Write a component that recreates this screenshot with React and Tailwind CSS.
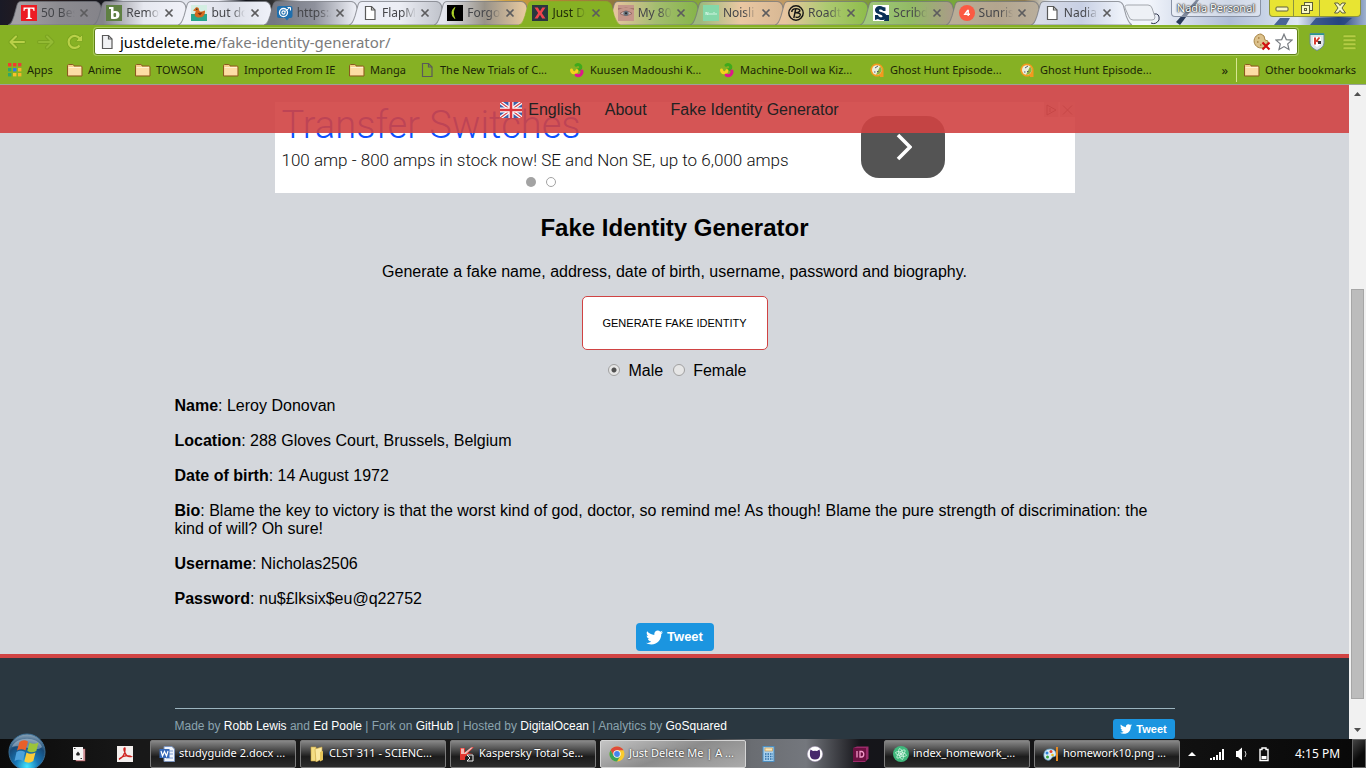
import { FaTwitter } from "react-icons/fa";

const uiFont = "font-['Noto_Sans','Open_Sans',sans-serif]";

/* ---------- small icons ---------- */

function PageIcon({ fill = "#fff", className = "" }) {
  return (
    <svg viewBox="0 0 16 16" className={"h-4 w-4 shrink-0 " + className} aria-hidden="true">
      <path d="M3.5 1.5h6l3.5 3.5v9.5h-9.5z" fill={fill} stroke="#5a5a5a" strokeWidth="1.2" />
      <path d="M9.5 1.5v3.5h3.5" fill="none" stroke="#5a5a5a" strokeWidth="1.2" />
    </svg>
  );
}

function FolderIcon() {
  return (
    <svg viewBox="0 0 16 16" className="h-4 w-4 shrink-0" aria-hidden="true">
      <path d="M.5 4c0-1 .5-1.500 1.200-1.500h4.100c.8 0 1 .6 1.200 1.500h6.700c.8 0 1.300.4 1.300 1v9H.5z" fill="#f6cd8a" stroke="#8a5a20" />
      <path d="M1.500 6h12.500v7H1.500z" fill="#fcdda4" />
      <path d="M1.500 5.500h12.500" stroke="#fff1cf" />
    </svg>
  );
}

function AppsIcon() {
  const colors = ["#f23b2f", "#f23b2f", "#e8403a", "#2fa866", "#2f7be8", "#f7b529", "#2fa866", "#f7c12a", "#f7b529"];
  return (
    <svg viewBox="0 0 14 14" className="h-3.5 w-3.5 shrink-0" aria-hidden="true">
      {colors.map((c, i) => (
        <rect key={i} x={(i % 3) * 5} y={Math.floor(i / 3) * 5} width="3.4" height="3.4" fill={c} />
      ))}
    </svg>
  );
}

function SwirlIcon() {
  return (
    <svg viewBox="0 0 16 16" className="h-4 w-4 shrink-0" aria-hidden="true" fill="none" strokeWidth="3" strokeLinecap="round">
      <path d="M7 3.200c2.500-1.600 5.500.2 4.600 3-.5 1.200-1.300 1.700-2.300 1.600" stroke="#3faa1c" />
      <path d="M2.500 8c.3 3.200 4.200 4 5.500.6" stroke="#f3d21b" />
      <path d="M12.800 9c1.200 3.200-3 6-5.600 4" stroke="#e0178c" />
    </svg>
  );
}

function GhostIcon() {
  return (
    <svg viewBox="0 0 16 16" className="h-4 w-4 shrink-0" aria-hidden="true">
      <path d="M8 1.500a6.500 6.500 0 1 0 3 12.200V15h3.500V8A6.500 6.500 0 0 0 8 1.500z" fill="#f39a1e" />
      <circle cx="7.800" cy="8" r="4.800" fill="#e9f0dd" />
      <path d="M11 4.500a4.800 4.800 0 0 1-4 8.200z" fill="#8fb23a" />
      <path d="M5 10h1.500M8 9.500h1.500M6 6l3-2" stroke="#556" />
    </svg>
  );
}

function Favicon({ kind }) {
  const cls = "h-4 w-4 shrink-0";
  switch (kind) {
    case "t":
      return (
        <svg viewBox="0 0 16 16" className={cls}>
          <rect width="16" height="16" fill="#ec1c24" />
          <path d="M2.500 2.500h11v3.500h-1c0-1.500-.6-2.300-2-2.300H9.200v8.400c0 .7.4 1 1.600 1v.9H5.200v-.9c1.200 0 1.600-.3 1.600-1V3.700H5.500c-1.400 0-2 .8-2 2.300h-1z" fill="#fff" />
        </svg>
      );
    case "b":
      return (
        <svg viewBox="0 0 16 16" className={cls}>
          <rect width="16" height="16" fill="#5f8043" />
          <path d="M3 2h4.500v4.200c4-1 6 .7 6 3.600 0 3.600-3 4.900-8.500 3.900V4H3z" fill="#fff" />
          <rect x="7.500" y="8" width="2.600" height="4" rx="1" fill="#5f8043" />
        </svg>
      );
    case "duck":
      return (
        <svg viewBox="0 0 16 16" className={cls}>
          <rect width="16" height="10" fill="#d3eee2" />
          <rect y="9" width="16" height="7" fill="#29a58c" />
          <path d="M4 3.500C5 1.500 8 2 8 4.500c0 1.500 1 2.500 3 2l3-1c.3 4-1.500 7-5.500 7S3 10.500 4 8l1-1.500-3-1z" fill="#d46a1e" />
          <path d="M6.500 8l5-.5-2.500 3z" fill="#773011" />
          <circle cx="5.800" cy="4.200" r=".7" fill="#222" />
        </svg>
      );
    case "target":
      return (
        <svg viewBox="0 0 16 16" className={cls}>
          <path d="M2 1h11.500q2 0 2 2v8q0 2-2 2H12l-2 2.500L8 13H2q-2 0-2-2V3q0-2 2-2z" fill="#1f6fae" />
          <circle cx="6.500" cy="7.500" r="4" fill="none" stroke="#fff" strokeWidth="1.300" />
          <circle cx="6.500" cy="7.500" r="1.600" fill="none" stroke="#fff" strokeWidth="1.200" />
          <path d="M8 6.500l5-4M10.500 2.500h3v3" stroke="#fff" fill="none" />
        </svg>
      );
    case "moon":
      return (
        <svg viewBox="0 0 16 16" className={cls}>
          <rect width="16" height="16" fill="#000" />
          <path d="M8 2.500a6.500 6.500 0 0 0 0 11C5.900 10.500 5.900 5.500 8 2.500z" fill="#b7e02c" stroke="#b7e02c" strokeWidth=".8" />
        </svg>
      );
    case "x":
      return (
        <svg viewBox="0 0 16 16" className={cls}>
          <rect width="16" height="16" fill="#2a3640" />
          <path d="M2.500 2.500h3.300L8 6.200l2.300-3.700h3.200L9.800 8l3.700 5.500h-3.300L8 9.800l-2.300 3.700H2.500L6.200 8z" fill="#f0444c" />
        </svg>
      );
    case "eye":
      return (
        <svg viewBox="0 0 16 16" className={cls}>
          <rect width="16" height="16" fill="#c4968a" />
          <path d="M0 5q8-5 16 0v-2H0z" fill="#a5766d" />
          <path d="M2 8.500q6-5 12 0-6 4-12 0z" fill="#cdbebc" stroke="#8b5e58" strokeWidth=".8" />
          <circle cx="8" cy="8.300" r="2.600" fill="#66707a" />
          <circle cx="8" cy="8.300" r="1" fill="#222" />
        </svg>
      );
    case "noisli":
      return (
        <svg viewBox="0 0 16 16" className={cls}>
          <rect width="16" height="16" fill="#85d8a9" />
          <path d="M3 10V7l2 3V7M7 8v2M9 8v2M11 7v3M13 8v2" stroke="#d2f5e2" fill="none" />
        </svg>
      );
    case "road":
      return (
        <svg viewBox="0 0 16 16" className={cls}>
          <circle cx="8" cy="8" r="7.200" fill="none" stroke="#151515" strokeWidth="1.400" />
          <path d="M7.800 3.500L5.800 13M3.800 7C3.500 3.500 8.500 3 11 4.300c2 1.300.5 3.300-3.800 3.500 5-.3 6 1.700 4.500 3.400-1.200 1.300-3.200 1.200-4.200.5" fill="none" stroke="#151515" strokeWidth="1.400" />
        </svg>
      );
    case "scribd":
      return (
        <svg viewBox="0 0 16 16" className={cls}>
          <rect width="16" height="16" fill="#fff" />
          <path d="M12.500 2.500V6H10C9.500 4.500 6 4 6 5.500 6 7.500 13.500 7 13.500 11c0 4.500-6 5-8.500 3l-3 1v-5h3c.5 2.500 4.500 3 4.500 1.300C9.500 9 2 9.500 2 5.300 2 1 7.500 0 10 2z" fill="#0b3157" />
          <path d="M12.500 10H16v6h-5z" fill="#0b3157" />
        </svg>
      );
    case "sunrise":
      return (
        <svg viewBox="0 0 16 16" className={cls}>
          <circle cx="8" cy="8" r="8" fill="#fb5a43" />
          <path d="M9.200 11V5.500h-.6L5.800 9.300H11" fill="none" stroke="#fff" strokeWidth="1.400" />
        </svg>
      );
    default:
      return <PageIcon />;
  }
}

/* ---------- browser tabs ---------- */

const tabs = [
  { icon: "t", title: "50 Best", c: ["#a4a1a6", "#8c8b90", "#85848a"] },
  { icon: "b", title: "Remove", c: ["#85858b", "#e6e8f0", "#f0f1f8"] },
  { icon: "duck", title: "but does", c: ["#f0f2f9", "#dcdfe8", "#eef0f8"] },
  { icon: "target", title: "https://", c: ["#747883", "#8e919c", "#eceef5"] },
  { icon: "page", title: "FlapMMO", c: ["#eef0f8", "#eceef5", "#c2c5cd"] },
  { icon: "moon", title: "Forgot", c: ["#e4e6ee", "#999389", "#e7c9a0"] },
  { icon: "x", title: "Just Del", active: true, c: ["#86b124", "#86b124", "#86b124"] },
  { icon: "eye", title: "My 80s", c: ["#e5c49e", "#a4bd70", "#87b54b"] },
  { icon: "noisli", title: "Noisli |", c: ["#9db97c", "#eac8a3", "#d9b995"] },
  { icon: "road", title: "Roadtrip", c: ["#e8c5a0", "#aeca72", "#8fbd4c"] },
  { icon: "scribd", title: "Scribd", c: ["#a0c87a", "#92ba65", "#a99d87"] },
  { icon: "sunrise", title: "Sunrise", c: ["#b9ad97", "#b3a58e", "#b9ae9c"] },
  { icon: "page", title: "Nadia P", c: ["#d8dce8", "#c8d0e4", "#eef2fa"] },
];

function Tab({ tab, index }) {
  const id = "tabfill" + index;
  return (
    <div className={"relative flex h-6 min-w-0 flex-1 items-center pl-[13px] pr-1 " + (tab.active ? "z-10" : "")}>
      <svg viewBox="0 0 101 24" preserveAspectRatio="none" className="absolute -right-4 left-0 top-0 h-full w-[calc(100%+16px)]" aria-hidden="true">
        <defs>
          <linearGradient id={id}>
            <stop offset="0.1" stopColor={tab.c[0]} />
            <stop offset="0.5" stopColor={tab.c[1]} />
            <stop offset="0.9" stopColor={tab.c[2]} />
          </linearGradient>
        </defs>
        <path
          d="M0 24C4 23 4 20 6 15L9 4Q10 .5 13 .5H87Q90 .5 92 4L95 15C97 20 98 23 101 24z"
          fill={"url(#" + id + ")"}
          stroke={tab.active ? "#86b124" : "#70737a"}
          strokeOpacity="0.7"
        />
      </svg>
      <span className="relative flex min-w-0 flex-1 items-center">
        <Favicon kind={tab.icon} />
        <span
          className={
            "ml-1 w-[34px] overflow-hidden whitespace-nowrap text-[12px] leading-4 [mask-image:linear-gradient(to_right,#000_60%,transparent)] " +
            (tab.active ? "text-[#1f2a08]" : "text-[#45464a]")
          }
        >
          {tab.title}
        </span>
        <button type="button" aria-label={"Close " + tab.title} className="ml-auto shrink-0">
          <svg viewBox="0 0 10 10" className="h-2.5 w-2.5">
            <path d="M1.500 1.500l7 7M8.500 1.500l-7 7" stroke="#5c5c5e" strokeWidth="1.700" />
          </svg>
        </button>
      </span>
    </div>
  );
}

function TabStrip() {
  return (
    <div className="relative flex h-[25px] items-end overflow-hidden bg-[linear-gradient(90deg,#1a1a26_0,#2a1c1c_3%,#15181f_8%,#cdd0d8_9%,#eef0f8_16%,#11141c_18%,#333_20%,#e9ecf4_22%,#dfe2ea_34%,#d1a344_37%,#b08334_41%,#8f7740_45%,#7ba832_50%,#c49a66_57%,#6e9a30_65%,#79a83a_70%,#8e7a50_75%,#e6edf8_77%,#f3f6fc_84%,#aebcd6_90%,#dfe8f5_95%,#234079_98%,#9fb2cf_100%)] pl-2">
      <svg viewBox="0 0 250 25" preserveAspectRatio="none" className="absolute right-0 top-0 h-full w-[250px]" aria-hidden="true">
        <path d="M60 22l20-22h3L64 25z" fill="#2a3b5a" />
        <path d="M38 14q6-1 5 6-3 5-8 3" fill="none" stroke="#2a3048" />
        <path d="M164 18l-6 7h12l4-7zM200 18l-6 7h34l8-7z" fill="#274681" opacity=".8" />
      </svg>
      <div className="flex min-w-0 flex-1">
        {tabs.map((t, i) => (
          <Tab key={t.icon + i} tab={t} index={i} />
        ))}
      </div>
      <div className="relative flex h-full w-[250px] shrink-0 items-start justify-end pr-[5px]">
        <button type="button" aria-label="New tab" className="ml-2 mr-auto mt-1">
          <svg viewBox="0 0 32 17" className="h-[17px] w-8">
            <path d="M4 1h20q3 0 4 3l3 9q0 3-3 3H9q-3 0-4-3L1 4q-1-3 3-3z" fill="#eef1f6" stroke="#a3a7ad" />
          </svg>
        </button>
        <button type="button" className="mr-2 h-[17px] w-[90px] rounded-b border border-t-0 border-[#8a93a5] bg-white/40 text-center text-[11px] leading-4 text-white [text-shadow:0_0_2px_#333,0_0_2px_#333,0_0_1px_#222]">
          Nadia Personal
        </button>
        <div className="flex h-[17px] w-[92px] overflow-hidden rounded-b border border-t-0 border-[#8b9340] bg-[#e8e432]">
          <button type="button" aria-label="Minimize" className="flex w-6 items-end justify-center border-r border-[#8b9340] pb-1">
            <svg viewBox="0 0 14 6" className="h-1.5 w-3.5"><rect x="1" y="1" width="12" height="4" rx="1" fill="#f8f7c5" stroke="#5c5e38" /></svg>
          </button>
          <button type="button" aria-label="Restore" className="flex w-[26px] items-center justify-center border-r border-[#8b9340]">
            <svg viewBox="0 0 14 14" className="h-3.5 w-3.5" fill="#f8f7c5" stroke="#5c5e38">
              <rect x="4.500" y="1.500" width="8" height="8" /><rect x="1.500" y="4.500" width="8" height="8" /><rect x="4.500" y="7.500" width="2" height="2" />
            </svg>
          </button>
          <button type="button" aria-label="Close window" className="flex flex-1 items-center justify-center">
            <svg viewBox="0 0 14 12" className="h-3 w-3.5">
              <path d="M1.500 1h3.500l2 2.500L9 1h3.500L9 6l3.500 5H9L7 8.500 5 11H1.500L5 6z" fill="#f8f7c5" stroke="#5c5e38" />
            </svg>
          </button>
        </div>
      </div>
    </div>
  );
}

/* ---------- toolbar ---------- */

function Toolbar() {
  return (
    <div className="flex h-[33px] items-center bg-[#86b124] px-2">
      <button type="button" aria-label="Back" className="mr-[11px]">
        <svg viewBox="0 0 18 16" className="h-4 w-[18px]" fill="none" strokeLinejoin="round" strokeLinecap="round">
          <path d="M8 2.500L2.500 8 8 13.500M3 8h13" stroke="#7aa41f" strokeWidth="4" />
          <path d="M8 2.500L2.500 8 8 13.500M3 8h13" stroke="#b9d048" strokeWidth="2" />
        </svg>
      </button>
      <button type="button" aria-label="Forward" className="mr-[11px]">
        <svg viewBox="0 0 18 16" className="h-4 w-[18px]" fill="none" strokeLinejoin="round" strokeLinecap="round">
          <path d="M10 2.500l5.500 5.500L10 13.500M15 8H2" stroke="#7ba320" strokeWidth="4" />
          <path d="M10 2.500l5.500 5.500L10 13.500M15 8H2" stroke="#93ba34" strokeWidth="2" />
        </svg>
      </button>
      <button type="button" aria-label="Reload" className="mr-2.5">
        <svg viewBox="0 0 18 18" className="h-[18px] w-[18px]" fill="none">
          <path d="M13.500 12.500a6 6 0 1 1 .2-6.800" stroke="#7aa41f" strokeWidth="4" />
          <path d="M16.500 1.500v7h-7z" fill="#b9d048" stroke="#7aa41f" strokeWidth=".8" />
          <path d="M13.500 12.500a6 6 0 1 1 .2-6.800" stroke="#b9d048" strokeWidth="2.200" />
        </svg>
      </button>
      <div className="relative flex h-[27px] min-w-0 flex-1 items-center rounded-[3px] border border-[#5f8016] bg-white px-1 shadow-[0_0_0_1px_#a8cb58]">
        <PageIcon fill="#f1f2f4" />
        <div className="relative ml-[5px] min-w-0 flex-1">
          <input aria-label="Address" defaultValue="justdelete.me/fake-identity-generator/" className="w-full bg-transparent text-[15px] leading-6 text-transparent outline-none" />
          <span aria-hidden="true" className="pointer-events-none absolute inset-0 whitespace-nowrap text-[15px] leading-6 text-[#7b7b7b]">
            <span className="text-black">justdelete.me</span>/fake-identity-generator/
          </span>
        </div>
        <svg viewBox="0 0 18 18" className="h-[18px] w-[18px] shrink-0" aria-hidden="true">
          <path d="M8 1a7 7 0 1 0 5 12l2-5-3-1-1-4z" fill="#dcc18b" stroke="#a78445" />
          <path d="M5 5h1.500M4 9h1.500M7 12h1.500" stroke="#a87f42" strokeWidth="1.300" />
          <path d="M9.500 9.500l7 7M16.500 9.500l-7 7" stroke="#d01010" strokeWidth="2.200" />
        </svg>
        <button type="button" aria-label="Bookmark this page" className="ml-1">
          <svg viewBox="0 0 18 18" className="h-[18px] w-[18px]">
            <path d="M9 1.200l2.300 5.400 5.700.5-4.300 3.800 1.300 5.700L9 13.600l-5 3 1.300-5.700L1 7.100l5.700-.5z" fill="#fff" stroke="#777b80" strokeWidth="1.200" />
          </svg>
        </button>
      </div>
      <button type="button" aria-label="Kaspersky Protection" className="ml-2.5">
        <svg viewBox="0 0 18 20" className="h-5 w-[18px]">
          <path d="M2 1.500h14v9c0 4-3 6-7 8-4-2-7-4-7-8z" fill="#dfe3e6" stroke="#6a8a94" />
          <path d="M2 1.500h14v1.500H2z" fill="#29978f" />
          <path d="M5 5h8v7l-4 3-4-3z" fill="#fff" />
          <path d="M7 5.500v7" stroke="#d63a2e" strokeWidth="2" />
          <path d="M11.500 5.500L8.500 9l3 1" stroke="#d63a2e" strokeWidth="1.800" fill="none" />
          <rect x="10" y="9" width="3" height="3" fill="#333" />
        </svg>
      </button>
      <button type="button" aria-label="Menu" className="ml-4">
        <svg viewBox="0 0 16 16" className="h-4 w-4">
          {[1, 5, 9, 13].map((y) => (
            <rect key={y} x="1" y={y} width="13" height="2.400" rx="1" fill="#b9d048" stroke="#7aa41f" strokeWidth=".6" />
          ))}
        </svg>
      </button>
    </div>
  );
}

const bookmarks = [
  { label: "Apps", icon: <AppsIcon />, w: "w-[59px]" },
  { label: "Anime", icon: <FolderIcon />, w: "w-[68px]" },
  { label: "TOWSON", icon: <FolderIcon />, w: "w-[88px]" },
  { label: "Imported From IE", icon: <FolderIcon />, w: "w-[126px]" },
  { label: "Manga", icon: <FolderIcon />, w: "w-[70px]" },
  { label: "The New Trials of C...", icon: <PageIcon fill="none" />, w: "w-[150px]" },
  { label: "Kuusen Madoushi K...", icon: <SwirlIcon />, w: "w-[150px]" },
  { label: "Machine-Doll wa Kiz...", icon: <SwirlIcon />, w: "w-[150px]" },
  { label: "Ghost Hunt Episode...", icon: <GhostIcon />, w: "w-[150px]" },
  { label: "Ghost Hunt Episode...", icon: <GhostIcon />, w: "w-[150px]" },
];

function BookmarksBar() {
  return (
    <div className="flex h-[27px] items-center overflow-hidden border-b border-[#9aa39a] bg-[#86b124] pb-0.5 pl-2 text-[11px] leading-5 text-[#1c2606]">
      {bookmarks.map((b, i) => (
        <a key={i} href="#bookmark" className={"flex items-center gap-[5px] whitespace-nowrap " + b.w}>
          {b.icon}
          <span>{b.label}</span>
        </a>
      ))}
      <button type="button" className="ml-auto mr-2 text-[13px]" aria-label="More bookmarks">»</button>
      <a href="#other" className="flex h-6 w-[130px] shrink-0 items-center gap-[5px] whitespace-nowrap border-l border-[#d8e692] pl-[7px]">
        <FolderIcon />
        <span>Other bookmarks</span>
      </a>
    </div>
  );
}

/* ---------- page ---------- */

function Flag() {
  return (
    <svg viewBox="0 0 22 16" className="h-4 w-[22px]" aria-hidden="true">
      <rect width="22" height="16" fill="#3f5fa6" />
      <path d="M0 0l22 16M22 0L0 16" stroke="#fff" strokeWidth="3.600" />
      <path d="M0 0l22 16M22 0L0 16" stroke="#d8434a" strokeWidth="1.300" />
      <path d="M11 0v16M0 8h22" stroke="#fff" strokeWidth="5" />
      <path d="M11 0v16M0 8h22" stroke="#d8343c" strokeWidth="2.600" />
    </svg>
  );
}

function SiteNav() {
  return (
    <nav className="absolute inset-x-0 top-0 z-10 flex h-12 items-center justify-center gap-6 bg-[#d04343]/90 pr-2.5 pt-0.5 text-[16px] text-[#222]">
      <a href="#english" className="flex items-center gap-1.5"><Flag />English</a>
      <a href="#about">About</a>
      <a href="#generator">Fake Identity Generator</a>
    </nav>
  );
}

function Ad() {
  return (
    <div className="relative mx-auto mt-[17px] flex h-[91px] w-full max-w-[800px] bg-white pl-[7px] font-['Roboto',sans-serif] font-light">
      <div className="w-[579px]">
        <p className="h-[47px] text-[38px] leading-[46px] text-[#0b50ff]">Transfer Switches</p>
        <p className="text-[17px] leading-[22px] text-[#111]">100 amp - 800 amps in stock now! SE and Non SE, up to 6,000 amps</p>
        <div className="mt-1.5 flex gap-2.5 pl-[244px]">
          <span className="h-2.5 w-2.5 rounded-full bg-[#a3a3a3]" />
          <span className="h-2.5 w-2.5 rounded-full border border-[#a3a3a3]" />
        </div>
      </div>
      <button type="button" aria-label="Next" className="mt-3.5 flex h-[62px] w-[84px] items-center justify-center rounded-[18px] bg-[#545454]">
        <svg viewBox="0 0 18 28" className="h-7 w-[18px]">
          <path d="M4 2l12 12L4 26" fill="none" stroke="#fff" strokeWidth="3.600" />
        </svg>
      </button>
      <svg viewBox="0 0 31 15" className="absolute right-0 top-0 h-[15px] w-[31px]" aria-hidden="true">
        <path d="M0 0h14.500v15H0zM16 0h15v15H16z" fill="#ddd" />
        <path d="M3 3l9 5-9 5zM19 3.500l9 9M28 3.500l-9 9" fill="none" stroke="#666" />
        <path d="M6 6v4" stroke="#666" />
      </svg>
    </div>
  );
}

const identity = [
  ["Name", "Leroy Donovan"],
  ["Location", "288 Gloves Court, Brussels, Belgium"],
  ["Date of birth", "14 August 1972"],
  ["Bio", "Blame the key to victory is that the worst kind of god, doctor, so remind me! As though! Blame the pure strength of discrimination: the kind of will? Oh sure!"],
  ["Username", "Nicholas2506"],
  ["Password", "nu$£lksix$eu@q22752"],
];

function GenderOption({ id, label, checked }) {
  return (
    <span className="flex items-center gap-2">
      <input
        type="radio"
        id={id}
        name="gender"
        defaultChecked={checked}
        className="mb-0.5 h-3 w-3 appearance-none rounded-full border border-[#a0a0a0] bg-[#e6e6e6] checked:bg-[radial-gradient(circle,#505050_0_2px,#e6e6e6_3px)]"
      />
      <label htmlFor={id}>{label}</label>
    </span>
  );
}

function Generator() {
  return (
    <main className="px-4">
      <Ad />
      <h1 className="mt-5 text-center text-[24px] font-bold leading-[30px]">Fake Identity Generator</h1>
      <p className="mt-5 text-center leading-[18px]">
        Generate a fake name, address, date of birth, username, password and biography.
      </p>
      <div className="mt-[15px] flex justify-center">
        <button type="button" className="h-[54px] w-[186px] rounded-[5px] border border-[#d04343] bg-white text-[11px] uppercase">
          Generate fake identity
        </button>
      </div>
      <div className="mt-3 flex justify-center gap-2.5 pl-1.5 leading-[18px]">
        <GenderOption id="male" label="Male" checked />
        <GenderOption id="female" label="Female" />
      </div>
      <dl className="mx-auto mt-[17px] flex max-w-[1000px] flex-col gap-[17px] leading-[18px]">
        {identity.map(([k, v]) => (
          <div key={k}>
            <dt className="inline font-bold">{k}</dt>
            <dd className="inline">: {v}</dd>
          </div>
        ))}
      </dl>
      <div className="mt-[15px] flex justify-center">
        <a href="#tweet" className="flex h-7 w-[78px] items-center justify-center gap-1 rounded bg-[#1b95e0] text-[13px] font-bold text-white">
          <FaTwitter className="h-[17px] w-[17px]" aria-hidden="true" />
          Tweet
        </a>
      </div>
    </main>
  );
}

function FooterLink({ children }) {
  return <a href="#link" className="text-white">{children}</a>;
}

function SiteFooter() {
  return (
    <footer className="mt-[3px] grow border-t-4 border-[#d04343] bg-[#2a3740] px-4 pt-[50px]">
      <div className="mx-auto flex max-w-[1000px] items-start justify-between border-t border-[#9cb4bf] pt-2.5 text-[12px] leading-[15px] text-[#8ba3ae]">
        <p>
          Made by <FooterLink>Robb Lewis</FooterLink> and <FooterLink>Ed Poole</FooterLink> | Fork on <FooterLink>GitHub</FooterLink> | Hosted by{" "}
          <FooterLink>DigitalOcean</FooterLink> | Analytics by <FooterLink>GoSquared</FooterLink>
        </p>
        <a href="#tweet" className="flex h-5 w-[62px] items-center justify-center gap-1 rounded-[3px] bg-[#1b95e0] text-[11px] font-bold text-white">
          <FaTwitter className="h-3 w-3" aria-hidden="true" />
          Tweet
        </a>
      </div>
    </footer>
  );
}

function Scrollbar() {
  return (
    <div className="flex w-[17px] shrink-0 flex-col items-center bg-[#f1f1f1]" aria-hidden="true">
      <svg viewBox="0 0 17 17" className="h-[17px] w-[17px]"><path d="M5 11l3.500-4 3.500 4z" fill="#505050" /></svg>
      <div className="flex w-full grow flex-col items-center">
        <div className="grow-[188]" />
        <div className="w-[13px] grow-[409] border border-[#a6a6a6] bg-[#bcbcbc]" />
        <div className="grow-[23]" />
      </div>
      <svg viewBox="0 0 17 17" className="h-[17px] w-[17px]"><path d="M5 6l3.500 4L12 6z" fill="#505050" /></svg>
    </div>
  );
}

/* ---------- taskbar ---------- */

function TaskIcon({ kind }) {
  const cls = "h-4 w-4 shrink-0";
  switch (kind) {
    case "cards":
      return (
        <svg viewBox="0 0 16 16" className={cls}>
          <rect x="5" y="3" width="9" height="12" fill="#d9a5ac" stroke="#a55" strokeWidth=".5" />
          <rect x="2" y="1" width="10" height="13" fill="#f5f5f5" />
          <path d="M7 5.500L9 8l-.7 1.500H5.700L5 8z" fill="#222" /><path d="M3 2.500h1.500M9.500 12.500H11" stroke="#333" />
        </svg>
      );
    case "pdf":
      return (
        <svg viewBox="0 0 16 16" className={cls}>
          <rect width="16" height="16" fill="#f4f0ee" />
          <path d="M2 13.500C6 11 8.500 7 8 2c-1-.5-1.500 1-.5 3.500C8.500 9 11 11 14 10.500c-3-1.500-8-.5-12 2.500" fill="none" stroke="#cf2420" strokeWidth="1.300" />
        </svg>
      );
    case "word":
      return (
        <svg viewBox="0 0 16 16" className={cls}>
          <path d="M5 .5h8L15.500 3v12.500H5z" fill="#f0f5fd" stroke="#7b93bd" />
          <path d="M10 5h4M10 8h4M7 12h7" stroke="#7a9bd0" />
          <rect x=".5" y="3" width="10" height="9" fill="#3769b8" />
          <path d="M2 5l1.500 5 2-4.500 2 4.500L9 5" fill="none" stroke="#fff" strokeWidth="1.200" />
        </svg>
      );
    case "folder":
      return (
        <svg viewBox="0 0 16 16" className={cls}>
          <path d="M2 1h5v14H2z" fill="#f4dd83" stroke="#c7a23e" strokeWidth=".6" />
          <path d="M6 3l7-2v12l-6 3z" fill="#fbe9a2" stroke="#c7a23e" strokeWidth=".6" />
          <path d="M11 6l3-1v9l-3 1.500z" fill="#e8c65a" />
        </svg>
      );
    case "kaspersky":
      return (
        <svg viewBox="0 0 16 16" className={cls}>
          <path d="M1 2h5v5l7-6h2L9 7l5 1H9l-3 3v3H1z" fill="#e2352e" />
          <path d="M2 2.500h3V7l7-5.500h2L7 8H2z" fill="#f3b8b3" />
          <path d="M8 9h6v6H8l3-3z" fill="#222" stroke="#eee" />
        </svg>
      );
    case "chrome":
      return (
        <svg viewBox="0 0 16 16" className={cls}>
          <circle cx="8" cy="8" r="7.500" fill="#f9cb2e" />
          <path d="M1.500 4.250A7.500 7.500 0 0 1 14.500 4.250H8L4.750 9.880z" fill="#de4b3b" />
          <path d="M1.500 4.250A7.500 7.500 0 0 0 8 15.500l3.250-5.600H4.750z" fill="#3ba457" />
          <circle cx="8" cy="8" r="3.700" fill="#fff" />
          <circle cx="8" cy="8" r="2.900" fill="#4586ec" />
        </svg>
      );
    case "calc":
      return (
        <svg viewBox="0 0 16 16" className={cls}>
          <rect x="2" y=".5" width="11" height="15" fill="#a8d1ee" stroke="#4c8ec0" />
          <rect x="4" y="2" width="7.500" height="3" fill="#f8e6b8" stroke="#c48a38" strokeWidth=".6" />
          <path d="M4 8h8M4 10.500h8M4 13h8" stroke="#2f6fa8" strokeDasharray="1.500 1" strokeWidth="1.500" />
        </svg>
      );
    case "github":
      return (
        <svg viewBox="0 0 16 16" className={cls}>
          <circle cx="8" cy="8" r="7.600" fill="#fff" stroke="#b9a8cc" strokeWidth=".5" />
          <path d="M3.500 3.500L6 5q2-.5 4 0l2.500-1.500q1 3 .6 5.500-.6 4.500-5.100 4.500T2.900 9q-.4-2.500.6-5.500z" fill="#46286b" />
        </svg>
      );
    case "indesign":
      return (
        <svg viewBox="0 0 16 16" className={cls}>
          <path d="M0 2L4 .5h11.500v12L12 16H0z" fill="#9b2a6a" />
          <rect y="2" width="13" height="13" fill="#6c1041" />
          <path d="M4 5v6.500M7 5.500V11h1.500c3 0 3-5.500 0-5.500z" stroke="#f19ac9" fill="none" strokeWidth="1.300" />
        </svg>
      );
    case "atom":
      return (
        <svg viewBox="0 0 16 16" className={cls}>
          <circle cx="8" cy="8" r="8" fill="#3fb87c" />
          <g fill="none" stroke="#d7f8e5" strokeWidth=".8">
            <ellipse cx="8" cy="8" rx="5.500" ry="2" transform="rotate(15 8 8)" />
            <ellipse cx="8" cy="8" rx="5.500" ry="2" transform="rotate(75 8 8)" />
            <ellipse cx="8" cy="8" rx="5.500" ry="2" transform="rotate(135 8 8)" />
          </g>
          <circle cx="8" cy="8" r="1" fill="#fff" />
        </svg>
      );
    default:
      return (
        <svg viewBox="0 0 16 16" className={cls}>
          <path d="M7 3c4 0 6.500 2.500 6 6-.5 2.500-3 1-4 2.500S7 15 4 14 .5 10 1 7.500 3.500 3 7 3z" fill="#d8ecf8" stroke="#5a9cc4" strokeWidth=".8" />
          <circle cx="4" cy="7" r="1.500" fill="#2f80d6" /><circle cx="8" cy="5.500" r="1.500" fill="#e24430" />
          <circle cx="4.500" cy="11" r="1.500" fill="#38a63f" /><circle cx="9.500" cy="9" r="1.300" fill="#e9c02a" />
          <path d="M14 1v14" stroke="#e48a23" strokeWidth="2" />
        </svg>
      );
  }
}

function TaskButton({ kind, label, active }) {
  return (
    <button
      type="button"
      className={
        "flex h-7 w-[146px] min-w-0 items-center gap-1 overflow-hidden whitespace-nowrap rounded-[2px] border pl-2 text-[11px] text-white [text-shadow:0_0_2px_#000] " +
        (active
          ? "border-[#d5d5d5] bg-[linear-gradient(160deg,#c4c4c4,#8c8c8c_50%,#aaa)]"
          : "border-[#7d7d7d] bg-[linear-gradient(180deg,#878787,#4a4a4a_35%,#1c1c1c_60%,#2c2c2c)]")
      }
    >
      <TaskIcon kind={kind} />
      <span>{label}</span>
    </button>
  );
}

function LauncherIcon({ kind, label }) {
  return (
    <button type="button" aria-label={label} className="flex w-[46px] shrink-0 items-center justify-center">
      <TaskIcon kind={kind} />
    </button>
  );
}

function Taskbar() {
  return (
    <div className="relative z-20 flex h-[29px] shrink-0 items-center bg-[linear-gradient(90deg,#0b0b0b_0,#181818_10%,#1a1a1a_50%,#6a6d72_55%,#74777d_59%,#15151a_63%,#151515_80%,#080808_100%)]">
      <button type="button" aria-label="Start" className="absolute -top-1.5 left-2 h-[35px] w-[38px] overflow-hidden">
        <svg viewBox="0 0 38 38" className="h-[38px] w-[38px]">
          <defs>
            <radialGradient id="orb" cx="0.5" cy="0.9" r="0.9">
              <stop offset="0" stopColor="#44e6ff" />
              <stop offset="0.35" stopColor="#1878b8" />
              <stop offset="0.7" stopColor="#174a78" />
              <stop offset="1" stopColor="#8fa6b8" />
            </radialGradient>
          </defs>
          <circle cx="19" cy="19" r="18" fill="url(#orb)" stroke="#3a6f96" />
          <path d="M4 14C8 3 30 3 34 14 28 20 12 11 4 14z" fill="#fff" opacity=".35" />
          <path d="M11.500 9q4-3 8.500-.5L17.500 17.500q-4-2.500-8.500 0z" fill="#e8602a" />
          <path d="M21.500 9.500q4 2.500 9 0l-2.200 8.500q-4.500 2.500-9 0z" fill="#9cc43a" />
          <path d="M8.500 19q4-2.500 8.500 0L15 28q-4-2.500-8.500 0z" fill="#4da1dc" />
          <path d="M18.500 19.500q4 2.500 9 0l-2.200 8.500q-4.500 3-9 .5z" fill="#fbcb3a" />
        </svg>
      </button>
      <div className="ml-14 flex">
        <LauncherIcon kind="cards" label="Solitaire" />
        <LauncherIcon kind="pdf" label="Adobe Reader" />
      </div>
      <div className="ml-0.5 flex gap-1">
        <TaskButton kind="word" label="studyguide 2.docx ..." />
        <TaskButton kind="folder" label="CLST 311 - SCIENC..." />
        <TaskButton kind="kaspersky" label="Kaspersky Total Se..." />
        <TaskButton kind="chrome" label="Just Delete Me | A ..." active />
      </div>
      <div className="flex">
        <LauncherIcon kind="calc" label="Calculator" />
        <LauncherIcon kind="github" label="GitHub" />
        <LauncherIcon kind="indesign" label="InDesign" />
      </div>
      <div className="flex gap-1">
        <TaskButton kind="atom" label="index_homework_..." />
        <TaskButton kind="paint" label="homework10.png ..." />
      </div>
      <div className="ml-auto flex h-full items-center">
        <svg viewBox="0 0 84 16" className="mr-6 h-4 w-[84px]" aria-hidden="true">
          <path d="M1 10l4-4 4 4z" fill="#fff" />
          <path d="M24 14v-2M27 14v-3M30 14V9M33 14V6M36 14V3" stroke="#fff" strokeWidth="2" />
          <path d="M49 5h2l4-3.500v13L51 11h-2z" fill="#fff" />
          <path d="M58 5q2 3 0 6" stroke="#ccc" fill="none" />
          <path d="M75 3.500V2h4v1.500h2v11h-8v-11z" fill="none" stroke="#fff" strokeWidth="1.400" />
          <rect x="74.500" y="10" width="5" height="3" fill="#fff" />
        </svg>
        <span className="w-[57px] whitespace-nowrap text-[12px] text-white">4:15 PM</span>
        <button type="button" aria-label="Show desktop" className="h-full w-3.5 border border-[#666] bg-[linear-gradient(135deg,#444,#0a0a0a_60%)]" />
      </div>
    </div>
  );
}

export default function App() {
  return (
    <div className={"flex h-screen flex-col overflow-hidden " + uiFont}>
      <header className="shrink-0">
        <TabStrip />
        <Toolbar />
        <BookmarksBar />
      </header>
      <div className="flex min-h-0 flex-1">
        <div className="relative flex min-w-0 flex-1 flex-col overflow-hidden bg-[#d4d7dc] font-['Liberation_Sans',Arial,sans-serif] text-[16px] text-black">
          <SiteNav />
          <Generator />
          <SiteFooter />
        </div>
        <Scrollbar />
      </div>
      <Taskbar />
    </div>
  );
}
